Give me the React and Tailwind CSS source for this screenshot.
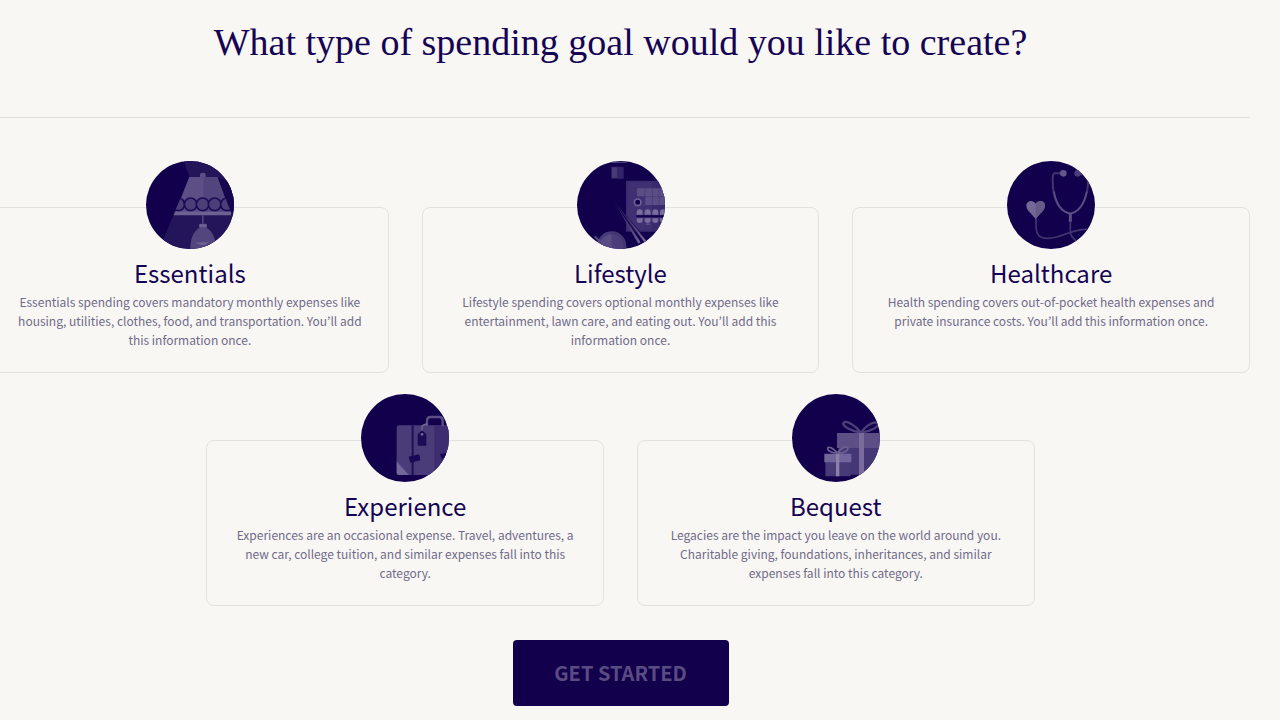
import React from 'react';

const LampIcon = () => (
  <svg viewBox="0 0 264 264" className="h-full w-full" aria-hidden="true">
    <clipPath id="shade">
      <path d="M130 48H214L254 154H86Z" />
    </clipPath>
    <path d="M113 0L130 46L86 154L50 240V264H264V0Z" fill="#241459" />
    <path d="M214 48L264 70V150L256 152Z" fill="#160650" />
    <path d="M130 48H214L254 160H86Z" fill="#5d4f86" />
    <path d="M172 48H214L254 160H172Z" fill="#52447d" />
    <path d="M162 48V42Q162 35 171 35Q179 35 179 42V48Z" fill="#5d4f86" />
    <g fill="#4c3e79" stroke="#1d0b56" strokeWidth="5" clipPath="url(#shade)">
      <circle cx="97" cy="130" r="19" />
      <circle cx="134" cy="130" r="19" />
      <circle cx="170" cy="130" r="19" />
      <circle cx="206" cy="130" r="19" />
      <circle cx="243" cy="130" r="19" />
    </g>
    <path d="M87 152H255V163H83Z" fill="#6d6092" />
    <path d="M168 163H173V188H168Z" fill="#53457d" />
    <path d="M160 188H182V200C201 212 209 232 210 264H133C133 232 142 211 160 200Z" fill="#53457d" />
    <path d="M160 190H182V199H160Z" fill="#6d6092" />
    <path d="M150 244H186Q182 252 170 252Q154 252 150 244Z" fill="#6d6092" />
  </svg>
);

const LeisureIcon = () => (
  <svg viewBox="0 0 264 264" className="h-full w-full" aria-hidden="true">
    <linearGradient id="needle" gradientUnits="userSpaceOnUse" x1="107" y1="116" x2="207" y2="245">
      <stop offset="0" stopColor="#1d0b56" />
      <stop offset="0.5" stopColor="#46376f" />
      <stop offset="1" stopColor="#74679a" />
    </linearGradient>
    <path d="M103 2H148V6H103Z" fill="#4b3d78" />
    <path d="M103 17H140V53H103Z" fill="#33236a" />
    <path d="M105 19H120V50H105Z" fill="#493b77" />
    <path d="M147 59H264V212H147Z" fill="#392a6d" />
    <path d="M152 64H226V206H152Z" fill="#402f72" />
    <path d="M180 82H264V132H204V106H180Z" fill="#5b4d86" />
    <path d="M204 82V132M226 82V132M246 82V132M180 107H264" stroke="#463777" strokeWidth="2" />
    <circle cx="182" cy="124" r="10" fill="#14004d" stroke="#706394" strokeWidth="5" />
    <path d="M179 161V154A9 9 0 0 1 197 154V161ZM203 161V154A9 9 0 0 1 221 154V161ZM226 161V154A9 9 0 0 1 244 154V161ZM249 161V154A9 9 0 0 1 267 154V161Z" fill="#796d9c" />
    <path d="M179 172H197V177A9 9 0 0 1 179 177ZM203 172H221V177A9 9 0 0 1 203 177ZM226 172H244V177A9 9 0 0 1 226 177ZM249 172H267V177A9 9 0 0 1 249 177Z" fill="#796d9c" />
    <path d="M178 166H264" stroke="#14004d" strokeWidth="6" />
    <path d="M205 192L213 184L221 192Z" fill="#5b4d86" />
    <path d="M108 116L213 241L206 248L184 246Z" fill="#14004d" opacity="0.7" />
    <path d="M108 116L211 243L204 247Z" fill="url(#needle)" />
    <path d="M110 120L191 244L184 248Z" fill="url(#needle)" />
    <circle cx="104" cy="255" r="44" fill="#483a76" />
    <circle cx="104" cy="255" r="35" fill="#594b83" />
    <path d="M104 211A44 44 0 0 1 148 255V264H104Z" fill="#413171" opacity="0.55" />
    <path d="M53 226L70 243" stroke="#594b83" strokeWidth="6" />
  </svg>
);

const StethoscopeIcon = () => (
  <svg viewBox="0 0 264 264" className="h-full w-full" fill="none" aria-hidden="true">
    <path d="M160 37H145C137 37 137 44 137 55C137 100 147 150 190 158C230 151 243 95 243 62L238 40H220" stroke="#43336f" strokeWidth="6" />
    <path d="M141 92C148 130 163 153 190 158C218 152 232 127 239 92" stroke="#5c4d82" strokeWidth="5" />
    <circle cx="169" cy="37" r="10" fill="#655689" />
    <circle cx="212" cy="37" r="10" fill="#4d3d78" />
    <path d="M190 158V183" stroke="#5c4d82" strokeWidth="9" />
    <path d="M190 181V211C190 223 195 231 208 240" stroke="#43336f" strokeWidth="5" />
    <path d="M87 170V193C87 223 98 232 123 232C166 232 190 203 242 205" stroke="#43336f" strokeWidth="5" />
    <path d="M86 175C75 157 58 149 58 134C58 119 78 115 86 128C94 115 114 119 114 134C114 149 97 157 86 175Z" fill="#766894" />
    <path d="M86 175V128C94 115 114 119 114 134C114 149 97 157 86 175Z" fill="#685989" />
  </svg>
);

const SuitcaseIcon = () => (
  <svg viewBox="0 0 264 264" className="h-full w-full" fill="none" aria-hidden="true">
    <path d="M115 94H264V243H115Q107 243 107 235V103Q107 94 115 94Z" fill="#4a3c79" />
    <path d="M220 94H264V243H220Z" fill="#3d2d70" />
    <path d="M107 202L143 243H115Q107 243 107 235Z" fill="#74679a" />
    <path d="M155 94V243" stroke="#200f59" strokeWidth="6" />
    <path d="M198 96V80Q198 69 209 69H235Q245 69 245 80V96" stroke="#5d4f86" strokeWidth="7" />
    <path d="M183 121V99Q184 92 198 90" stroke="#76699a" strokeWidth="4" />
    <path d="M170 121L183 109L196 121V155H170Z" fill="#1d0b56" />
    <circle cx="183" cy="121" r="4" fill="#76699a" />
    <path d="M143 188L175 181L178 199L148 206Z" fill="#1b0854" />
    <path d="M237 180L264 174V190L242 194Z" fill="#1b0854" />
  </svg>
);

const GiftIcon = () => (
  <svg viewBox="0 0 264 264" className="h-full w-full" fill="none" aria-hidden="true">
    <path d="M207 116C188 91 163 79 155 86C148 94 174 111 207 116C225 91 249 79 264 89M207 116C235 113 259 100 260 87" stroke="#4d3d79" strokeWidth="7" />
    <path d="M135 117H264V162H135Z" fill="#5d4f86" />
    <path d="M139 162H264V242H139Z" fill="#453675" />
    <path d="M201 117H216V242H201Z" fill="#796c9d" />
    <path d="M137 177C122 160 108 156 107 163C106 171 121 177 137 177C149 158 164 156 168 162C168 173 151 177 137 177" stroke="#6d608f" strokeWidth="5" />
    <path d="M100 204H176V247H100Z" fill="#483a76" />
    <path d="M97 179H178V205H97Z" fill="#72659a" />
    <path d="M132 179H142V247H132Z" fill="#8b80a9" />
  </svg>
);

const goals = [
  {
    title: 'Essentials',
    Icon: LampIcon,
    text: 'Essentials spending covers mandatory monthly expenses like housing, utilities, clothes, food, and transportation. You’ll add this information once.',
  },
  {
    title: 'Lifestyle',
    Icon: LeisureIcon,
    text: 'Lifestyle spending covers optional monthly expenses like entertainment, lawn care, and eating out. You’ll add this information once.',
  },
  {
    title: 'Healthcare',
    Icon: StethoscopeIcon,
    text: 'Health spending covers out-of-pocket health expenses and private insurance costs. You’ll add this information once.',
  },
  {
    title: 'Experience',
    Icon: SuitcaseIcon,
    text: 'Experiences are an occasional expense. Travel, adventures, a new car, college tuition, and similar expenses fall into this category.',
  },
  {
    title: 'Bequest',
    Icon: GiftIcon,
    text: 'Legacies are the impact you leave on the world around you. Charitable giving, foundations, inheritances, and similar expenses fall into this category.',
  },
];

const GoalCard = ({ title, text, Icon }) => (
  <article className="flex w-[calc((100%-66px)/3)] flex-col items-center">
    <div className="z-10 -mb-[42px] h-[88px] w-[88px] shrink-0 overflow-hidden rounded-full bg-[#12004c]">
      <Icon />
    </div>
    <div className="w-full flex-1 rounded-lg border border-[#e2e2e1] px-6 pt-[49px] pb-[23px] text-center">
      <h2 className="text-[24px] leading-8 text-[#150453]">{title}</h2>
      <p className="mt-[3px] text-[12px] leading-[19px] text-[#706b8b]">{text}</p>
    </div>
  </article>
);

const App = () => {
  return (
    <div className="min-h-screen overflow-x-hidden bg-[#f8f7f3] font-['Noto_Sans_CJK_KR',sans-serif]">
      <main className="-ml-[9px] mr-[30px] flex flex-col items-center pb-3">
        <h1 className="pt-4 text-center font-['Liberation_Serif',serif] text-[38px] leading-[52px] text-[#150453]">
          What type of spending goal would you like to create?
        </h1>
        <hr className="mt-[49px] w-full border-[#dfdfde]" />
        <section className="mt-[43px] flex w-full flex-wrap justify-center gap-x-[33px] gap-y-[21px]">
          {goals.map((goal) => (
            <GoalCard key={goal.title} {...goal} />
          ))}
        </section>
        <button
          type="button"
          className="mt-[34px] h-[66px] w-[216px] rounded bg-[#12004c] text-[20px] font-bold text-[#5a4b82]"
        >
          GET STARTED
        </button>
      </main>
    </div>
  );
};

export default App;
